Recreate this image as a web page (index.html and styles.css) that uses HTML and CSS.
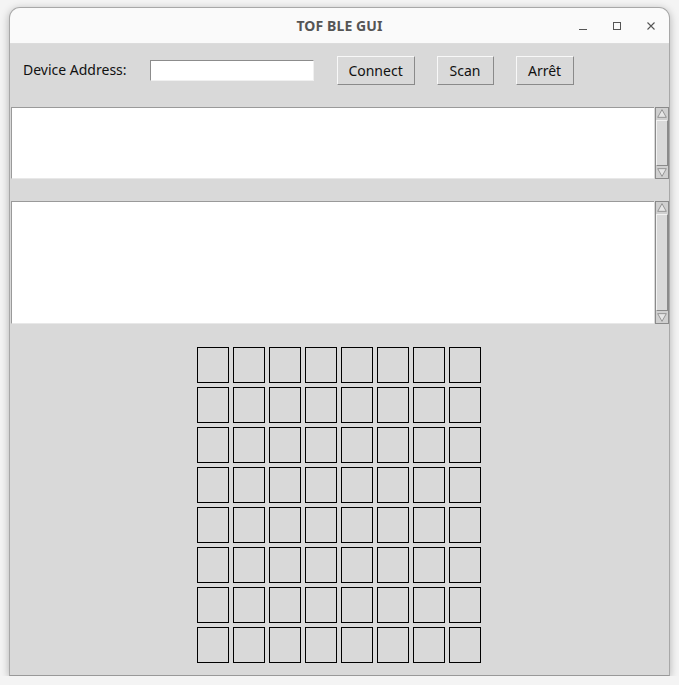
FILE: index.html
```html
<!DOCTYPE html>
<html>
<head>
<meta charset="utf-8">
<link rel="stylesheet" href="styles.css">
</head>
<body>
<div class="window">
  <div class="titlebar">
    <div class="title">TOF BLE GUI</div>
    <div class="controls">
      <svg class="ctl" width="12" height="12" viewBox="0 0 12 12"><path d="M2 9.5H10" stroke="#555" stroke-width="1.2"/></svg>
      <svg class="ctl" width="12" height="12" viewBox="0 0 12 12"><rect x="2.5" y="2.5" width="7" height="7" fill="none" stroke="#555" stroke-width="1"/></svg>
      <svg class="ctl" width="12" height="12" viewBox="0 0 12 12"><path d="M2.5 2.5L9.5 9.5M9.5 2.5L2.5 9.5" stroke="#555" stroke-width="1.1"/></svg>
    </div>
  </div>
  <div class="content">
    <div class="toolbar">
      <span class="label">Device Address:</span>
      <input class="entry" type="text">
      <button class="btn btn-connect">Connect</button>
      <button class="btn btn-scan">Scan</button>
      <button class="btn btn-stop">Arrêt</button>
    </div>
    <div class="textbox small">
      <div class="text"></div>
      <div class="scroll">
        <svg class="arrow" width="14" height="12" viewBox="0 0 14 12"><path d="M7 1.5L12 10.5H2Z" fill="#e6e6e6" stroke="#8a8a8a" stroke-width="1"/></svg>
        <div class="slider"></div>
        <svg class="arrow" width="14" height="12" viewBox="0 0 14 12"><path d="M7 10.5L12 1.5H2Z" fill="#e6e6e6" stroke="#8a8a8a" stroke-width="1"/></svg>
      </div>
    </div>
    <div class="textbox large">
      <div class="text"></div>
      <div class="scroll">
        <svg class="arrow" width="14" height="12" viewBox="0 0 14 12"><path d="M7 1.5L12 10.5H2Z" fill="#e6e6e6" stroke="#8a8a8a" stroke-width="1"/></svg>
        <div class="slider"></div>
        <svg class="arrow" width="14" height="12" viewBox="0 0 14 12"><path d="M7 10.5L12 1.5H2Z" fill="#e6e6e6" stroke="#8a8a8a" stroke-width="1"/></svg>
      </div>
    </div>
    <div class="grid">
      <div class="cell"></div><div class="cell"></div><div class="cell"></div><div class="cell"></div><div class="cell"></div><div class="cell"></div><div class="cell"></div><div class="cell"></div>
      <div class="cell"></div><div class="cell"></div><div class="cell"></div><div class="cell"></div><div class="cell"></div><div class="cell"></div><div class="cell"></div><div class="cell"></div>
      <div class="cell"></div><div class="cell"></div><div class="cell"></div><div class="cell"></div><div class="cell"></div><div class="cell"></div><div class="cell"></div><div class="cell"></div>
      <div class="cell"></div><div class="cell"></div><div class="cell"></div><div class="cell"></div><div class="cell"></div><div class="cell"></div><div class="cell"></div><div class="cell"></div>
      <div class="cell"></div><div class="cell"></div><div class="cell"></div><div class="cell"></div><div class="cell"></div><div class="cell"></div><div class="cell"></div><div class="cell"></div>
      <div class="cell"></div><div class="cell"></div><div class="cell"></div><div class="cell"></div><div class="cell"></div><div class="cell"></div><div class="cell"></div><div class="cell"></div>
      <div class="cell"></div><div class="cell"></div><div class="cell"></div><div class="cell"></div><div class="cell"></div><div class="cell"></div><div class="cell"></div><div class="cell"></div>
      <div class="cell"></div><div class="cell"></div><div class="cell"></div><div class="cell"></div><div class="cell"></div><div class="cell"></div><div class="cell"></div><div class="cell"></div>
    </div>
  </div>
</div>
</body>
</html>
```
FILE: styles.css
```css
html, body {
  margin: 0;
  padding: 0;
  background: #f4f4f4;
  font-family: "Noto Sans", "DejaVu Sans", sans-serif;
}
.window {
  margin: 7px 0 0 9px;
  width: 661px;
  height: 669px;
  box-sizing: border-box;
  border: 1px solid #a8a8a8;
  border-bottom-color: #999;
  border-radius: 11px 11px 0 0;
  background: #d9d9d9;
  box-shadow: 0 2px 8px rgba(0,0,0,0.28);
  display: flex;
  flex-direction: column;
  overflow: hidden;
}
.titlebar {
  height: 36px;
  flex: none;
  background: #fafafa;
  border-bottom: 1px solid #dcdcdc;
  box-sizing: border-box;
  display: flex;
  align-items: center;
  justify-content: center;
  position: relative;
}
.title {
  font-size: 14px;
  font-weight: bold;
  color: #555;
  letter-spacing: 0.1px;
}
.controls {
  position: absolute;
  right: 12px;
  top: 12px;
  display: flex;
  gap: 22px;
}
.ctl { display: block; }
.content {
  flex: 1;
  display: flex;
  flex-direction: column;
  padding-left: 1px;
}
.toolbar {
  height: 63px;
  display: flex;
  align-items: flex-start;
  padding-top: 12px;
  box-sizing: border-box;
}
.label {
  margin-left: 12px;
  margin-top: 4px;
  font-size: 14px;
  color: #111;
}
.entry {
  margin: 4px 0 0 23px;
  width: 164px;
  height: 21px;
  box-sizing: border-box;
  border: 1px solid;
  border-color: #8c8c8c #f0f0f0 #f0f0f0 #8c8c8c;
  background: #fff;
  padding: 0;
  outline: none;
}
.btn {
  height: 29px;
  box-sizing: border-box;
  background: #d9d9d9;
  border: 1px solid;
  border-color: #f8f8f8 #8a8a8a #8a8a8a #f8f8f8;
  font-family: "Noto Sans", "DejaVu Sans", sans-serif;
  font-size: 14px;
  color: #111;
  padding: 0;
}
.btn-connect { width: 78px; margin-left: 23px; }
.btn-scan { width: 57px; margin-left: 22px; }
.btn-stop { width: 58px; margin-left: 22px; }
.textbox {
  display: flex;
}
.textbox.small { height: 72px; }
.textbox.large { height: 123px; margin-top: 22px; }
.text {
  flex: 1;
  background: #fff;
  border-top: 1px solid #9a9a9a;
  border-left: 1px solid #9a9a9a;
  border-bottom: 1px solid #e8e8e8;
}
.scroll {
  width: 14px;
  margin-left: 1px;
  box-sizing: border-box;
  border: 1px solid #8a8a8a;
  background: #d0d0d0;
  display: flex;
  flex-direction: column;
}
.arrow {
  display: block;
  width: 12px;
  height: 11px;
  flex: none;
}
.slider {
  flex: 1;
  margin: 1px 0;
  background: #d9d9d9;
  border: 1px solid;
  border-color: #f2f2f2 #8a8a8a #8a8a8a #f2f2f2;
}
.grid {
  margin-top: 23px;
  padding-right: 2px;
  display: grid;
  grid-template-columns: repeat(8, 32px);
  grid-auto-rows: 36px;
  column-gap: 4px;
  row-gap: 4px;
  justify-content: center;
}
.cell {
  border: 1px solid #000;
  box-sizing: border-box;
}
```
